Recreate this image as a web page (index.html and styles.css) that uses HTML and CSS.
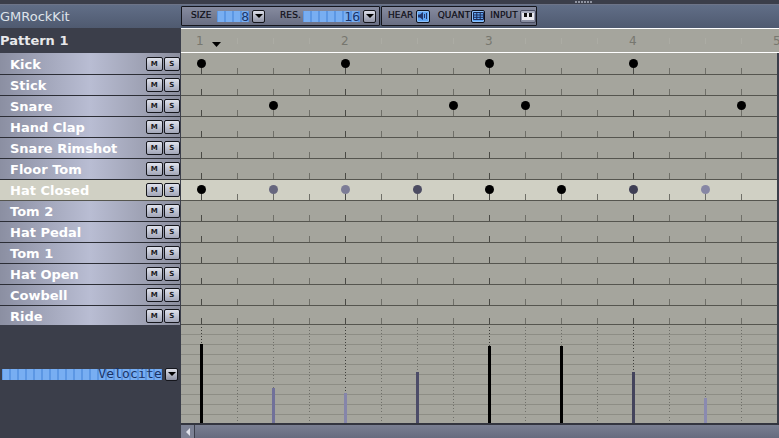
FILE: index.html
```html
<!DOCTYPE html>
<html lang="fr">
<head>
<meta charset="utf-8">
<title>Pattern editor</title>
<link rel="stylesheet" href="styles.css">
</head>
<body>
<div class="grip-bar"><div class="grip"></div></div>
<header class="top">
  <div class="kit">GMRockKit</div>
  <div class="toolbar">
    <div class="tool-group tool-group-a">
      <span class="tool-label label-size">SIZE</span>
      <span class="lcd lcd-size">8</span>
      <span class="drop"><i class="arrow"></i></span>
      <span class="tool-label label-res">RES.</span>
      <span class="lcd lcd-res">16</span>
      <span class="drop"><i class="arrow"></i></span>
    </div>
    <div class="tool-group tool-group-b">
      <span class="tool-label label-hear">HEAR</span>
      <span class="icon-btn on">
        <svg width="10" height="8" viewBox="0 0 10 8"><path d="M0 2.500h2l3-2.500v8L2 5.500H0z" fill="#24366a"/><path d="M6.500 2v4M8.500 1v6" stroke="#24366a" stroke-width="1"/></svg>
      </span>
      <span class="tool-label label-quant">QUANT</span>
      <span class="icon-btn on">
        <svg width="11" height="8" viewBox="0 0 11 8"><path d="M.5.500h10v7H.5zM.5 3h10M.5 5.300h10M3.800.5v7M7.200.5v7" fill="none" stroke="#1c2a55"/></svg>
      </span>
      <span class="tool-label label-input">INPUT</span>
      <span class="icon-btn off">
        <svg width="12" height="7" viewBox="0 0 12 7"><rect width="12" height="7" fill="#e8e8ee"/><rect x="2" width="3" height="4" fill="#111"/><rect x="7" width="3" height="4" fill="#111"/></svg>
      </span>
    </div>
  </div>
</header>

<div class="pattern-head">
  <div class="pattern-name">Pattern 1</div>
  <svg class="ruler" width="598" height="25" viewBox="0 0 598 25">
    <rect x="0" y="0" width="598" height="1" fill="#fff"/>
    <rect x="0" y="24" width="598" height="1" fill="#fff"/>
    <path class="ruler-ticks" d="M56.500 10v6M92.500 10v6M128.500 10v6M200.500 10v6M236.500 10v6M272.500 10v6M344.500 10v6M380.500 10v6M416.500 10v6M488.500 10v6M524.500 10v6M560.500 10v6"/>
    <text class="ruler-num" x="15" y="17">1</text>
    <text class="ruler-num" x="160" y="17">2</text>
    <text class="ruler-num" x="304" y="17">3</text>
    <text class="ruler-num" x="448" y="17">4</text>
    <text class="ruler-num" x="592" y="17">5</text>
    <path d="M31 14h9l-4.500 5z" fill="#000"/>
  </svg>
</div>

<main class="rows">
  <div class="row"><div class="inst"><span class="inst-name">Kick</span><span class="ms">M</span><span class="ms">S</span></div>
    <div class="track"><i class="note" style="left:20px"></i><i class="note" style="left:164px"></i><i class="note" style="left:308px"></i><i class="note" style="left:452px"></i></div></div>
  <div class="row"><div class="inst"><span class="inst-name">Stick</span><span class="ms">M</span><span class="ms">S</span></div><div class="track"></div></div>
  <div class="row"><div class="inst"><span class="inst-name">Snare</span><span class="ms">M</span><span class="ms">S</span></div>
    <div class="track"><i class="note" style="left:92px"></i><i class="note" style="left:272px"></i><i class="note" style="left:344px"></i><i class="note" style="left:560px"></i></div></div>
  <div class="row"><div class="inst"><span class="inst-name">Hand Clap</span><span class="ms">M</span><span class="ms">S</span></div><div class="track"></div></div>
  <div class="row"><div class="inst"><span class="inst-name">Snare Rimshot</span><span class="ms">M</span><span class="ms">S</span></div><div class="track"></div></div>
  <div class="row"><div class="inst"><span class="inst-name">Floor Tom</span><span class="ms">M</span><span class="ms">S</span></div><div class="track"></div></div>
  <div class="row selected"><div class="inst"><span class="inst-name">Hat Closed</span><span class="ms">M</span><span class="ms">S</span></div>
    <div class="track"><i class="note" style="left:20px"></i><i class="note" style="left:92px;background:#66667e"></i><i class="note" style="left:164px;background:#7c7c96"></i><i class="note" style="left:236px;background:#4c4c62"></i><i class="note" style="left:308px"></i><i class="note" style="left:380px"></i><i class="note" style="left:452px;background:#3e3e54"></i><i class="note" style="left:524px;background:#8686a4"></i></div></div>
  <div class="row"><div class="inst"><span class="inst-name">Tom 2</span><span class="ms">M</span><span class="ms">S</span></div><div class="track"></div></div>
  <div class="row"><div class="inst"><span class="inst-name">Hat Pedal</span><span class="ms">M</span><span class="ms">S</span></div><div class="track"></div></div>
  <div class="row"><div class="inst"><span class="inst-name">Tom 1</span><span class="ms">M</span><span class="ms">S</span></div><div class="track"></div></div>
  <div class="row"><div class="inst"><span class="inst-name">Hat Open</span><span class="ms">M</span><span class="ms">S</span></div><div class="track"></div></div>
  <div class="row"><div class="inst"><span class="inst-name">Cowbell</span><span class="ms">M</span><span class="ms">S</span></div><div class="track"></div></div>
  <div class="row"><div class="inst"><span class="inst-name">Ride</span><span class="ms">M</span><span class="ms">S</span></div><div class="track"></div></div>
</main>

<section class="velocity">
  <div class="vel-side">
    <span class="lcd lcd-prop">Velocite</span>
    <span class="drop"><i class="arrow"></i></span>
  </div>
  <svg class="vel-chart" width="596" height="98" viewBox="0 0 596 98">
    <path class="vel-h" d="M0 9.500h596M0 19.500h596M0 29.500h596M0 39.500h596M0 49.500h596M0 59.500h596M0 69.500h596M0 79.500h596M0 89.500h596"/>
    <g class="vel-dots">
      <path class="major" d="M20.500 2v96M164.500 2v96M308.500 2v96M452.500 2v96"/>
      <path class="minor" d="M56.500 2v96M92.500 2v96M128.500 2v96M200.500 2v96M236.500 2v96M272.500 2v96M344.500 2v96M380.500 2v96M416.500 2v96M488.500 2v96M524.500 2v96M560.500 2v96"/>
    </g>
    <rect x="19" y="19" width="3" height="79" fill="#000"/>
    <rect x="91" y="63" width="3" height="35" fill="#71719a"/>
    <rect x="163" y="68" width="3" height="30" fill="#8585aa"/>
    <rect x="235" y="47" width="3" height="51" fill="#4c4c68"/>
    <rect x="307" y="21" width="3" height="77" fill="#000"/>
    <rect x="379" y="21" width="3" height="77" fill="#000"/>
    <rect x="451" y="47" width="3" height="51" fill="#43435c"/>
    <rect x="523" y="73" width="3" height="25" fill="#8a8ab0"/>
  </svg>
</section>

<footer class="scroll">
  <div class="scroll-btn"><i class="arrow-left"></i></div>
  <div class="scroll-track"></div>
</footer>
</body>
</html>
```
FILE: styles.css
```css
* { box-sizing: border-box; }
html, body { margin: 0; padding: 0; }
body {
  width: 779px;
  height: 438px;
  overflow: hidden;
  background: #3b3e4a;
  font-family: "DejaVu Sans", sans-serif;
}
.grip-bar { height: 4px; display: flex; justify-content: flex-start; padding-left: 575px; padding-top: 1px; }
.grip {
  width: 17px; height: 2px;
  background: repeating-linear-gradient(to right, #8f93a0 0 2px, transparent 2px 3px);
}
.top {
  height: 24px;
  display: flex;
  background: linear-gradient(#616e87, #4f5a70);
  border-top: 1px solid #6d7488;
}
.kit {
  width: 181px;
  color: #dfe3ea;
  font-size: 13px;
  line-height: 23px;
}
.toolbar { display: flex; gap: 1px; padding-top: 1px; }
.tool-group {
  height: 20px;
  display: flex;
  align-items: center;
  border: 1px solid #14151c;
  border-radius: 1px;
  background: linear-gradient(#868b9f, #696e83);
}
.tool-group-a { width: 199px; padding-left: 9px; }
.tool-group-b { width: 156px; padding-left: 6px; }
.tool-label { font-size: 9px; line-height: 14px; margin-bottom: 2px; color: #0c0c14; letter-spacing: .1px; -webkit-text-stroke: .2px #0c0c14; }
.label-size { width: 26px; }
.label-res { width: 23px; margin-left: 15px; }
.label-hear { width: 28px; }
.label-quant { width: 34px; margin-left: 8px; }
.label-input { width: 30px; margin-left: 5px; }
.lcd {
  display: block;
  height: 11px;
  text-align: right;
  color: #1a3468;
  font-family: "DejaVu Sans Mono", monospace;
  font-size: 13px;
  line-height: 11px;
  background-color: #6aa4ee;
  background-image: repeating-linear-gradient(to right, #5c97e4 0 1px, #78aef2 1px 7px, #5c97e4 7px 8px);
}
.lcd-size { width: 32px; margin-right: 3px; }
.lcd-res { width: 57px; margin-right: 3px; }
.lcd-prop { width: 160px; letter-spacing: .15px; line-height: 10px; }
.drop {
  width: 13px; height: 13px;
  display: flex; align-items: center; justify-content: center;
  border: 1px solid #15161c;
  border-radius: 2px;
  background: linear-gradient(#dcdee8, #8e92a4);
}
.arrow {
  display: block; width: 0; height: 0;
  border-left: 4px solid transparent;
  border-right: 4px solid transparent;
  border-top: 4px solid #000;
}
.icon-btn {
  width: 14px; height: 13px;
  display: flex; align-items: center; justify-content: center;
  border: 1px solid #10121c;
  border-radius: 2px;
}
.icon-btn.on { background: #5ea4f4; box-shadow: inset 0 0 0 1px #8cc0fa; }
.icon-btn.off { width: 16px; border-color: #4a4e62; background: linear-gradient(#a9aec0, #878ca0); }
.pattern-head { height: 25px; display: flex; }
.pattern-name {
  width: 181px;
  color: #e8e8ea;
  font-size: 13px;
  font-weight: 700;
  line-height: 25px;
}
.ruler { display: block; background: #a5a59d; }
.ruler-ticks { stroke: #acaca4; stroke-width: 1; }
.ruler-num { font-family: "DejaVu Sans", sans-serif; font-size: 12px; fill: #77776f; }
.rows { display: flex; flex-direction: column; }
.row { height: 21px; display: flex; }
.row:first-child { height: 22px; }
.row:first-child .inst { padding-top: 1px; }
.row:last-child { height: 19px; }
.row:last-child .inst { border-bottom: 0; padding-top: 1px; }
.inst {
  width: 180px;
  display: flex;
  align-items: center;
  gap: 1px;
  padding: 0 0 0 10px;
  background: linear-gradient(to right, #8b8fa2 0, #b9bdd3 50%, #8b8e9e 100%);
  border-bottom: 1px solid #2c2e36;
}
.inst-name { flex: 1; color: #fff; font-size: 13px; font-weight: 700; white-space: nowrap; }
.ms {
  width: 16.500px; height: 14px;
  border: 1px solid #15161c;
  border-radius: 2px;
  background: linear-gradient(#dfe2ec, #a2a6b8);
  color: #1a1a22;
  font-family: "DejaVu Sans", sans-serif;
  font-size: 7px;
  font-weight: 700;
  line-height: 12px;
  text-align: center;
}
.track {
  position: relative;
  width: 596px;
  margin-left: 1px;
  background-color: #a5a59d;
  background-image:
    linear-gradient(#55554f, #55554f),
    linear-gradient(to right, #4a4a45 0 1px, transparent 1px),
    linear-gradient(to right, #6f6f68 0 1px, transparent 1px);
  background-size: 100% 1px, 144px 7px, 36px 7px;
  background-position: 0 100%, 20px 100%, 20px 100%;
  background-repeat: no-repeat, repeat-x, repeat-x;
}
.selected .inst { background: #d0d0c4; border-bottom-color: #55554f; }
.selected .track { background-color: #d0d0c4; }
.note {
  position: absolute;
  bottom: 7px;
  width: 9px; height: 9px;
  margin-left: -4px;
  border-radius: 50%;
  background: #000;
}
.velocity { height: 98px; display: flex; }
.vel-side {
  width: 181px;
  display: flex;
  align-items: center;
  gap: 3px;
  padding-left: 2px;
}
.vel-chart { display: block; background: #a5a59d; }
.vel-h { stroke: #8d8d85; stroke-width: 1; }
.vel-dots path { stroke-width: 1; stroke-dasharray: 1 2 1 2 1 2 1 2 1 2 1 2 1 2 1 2 1 5; }
.major { stroke: #3f3f3b; }
.minor { stroke: #6f6f69; }
.scroll { height: 15px; display: flex; margin-left: 181px; border-top: 2px solid #33353f; background: #6a6f82; }
.scroll-btn {
  width: 14px;
  display: flex; align-items: center; justify-content: center;
  background: #7c8194;
  border-right: 1px solid #3b3e4a;
}
.arrow-left {
  display: block; width: 0; height: 0;
  border-top: 4px solid transparent;
  border-bottom: 4px solid transparent;
  border-right: 4px solid #dfe1ea;
}
.scroll-track { flex: 1; background: linear-gradient(#7a7f92, #666b7e); }
```
